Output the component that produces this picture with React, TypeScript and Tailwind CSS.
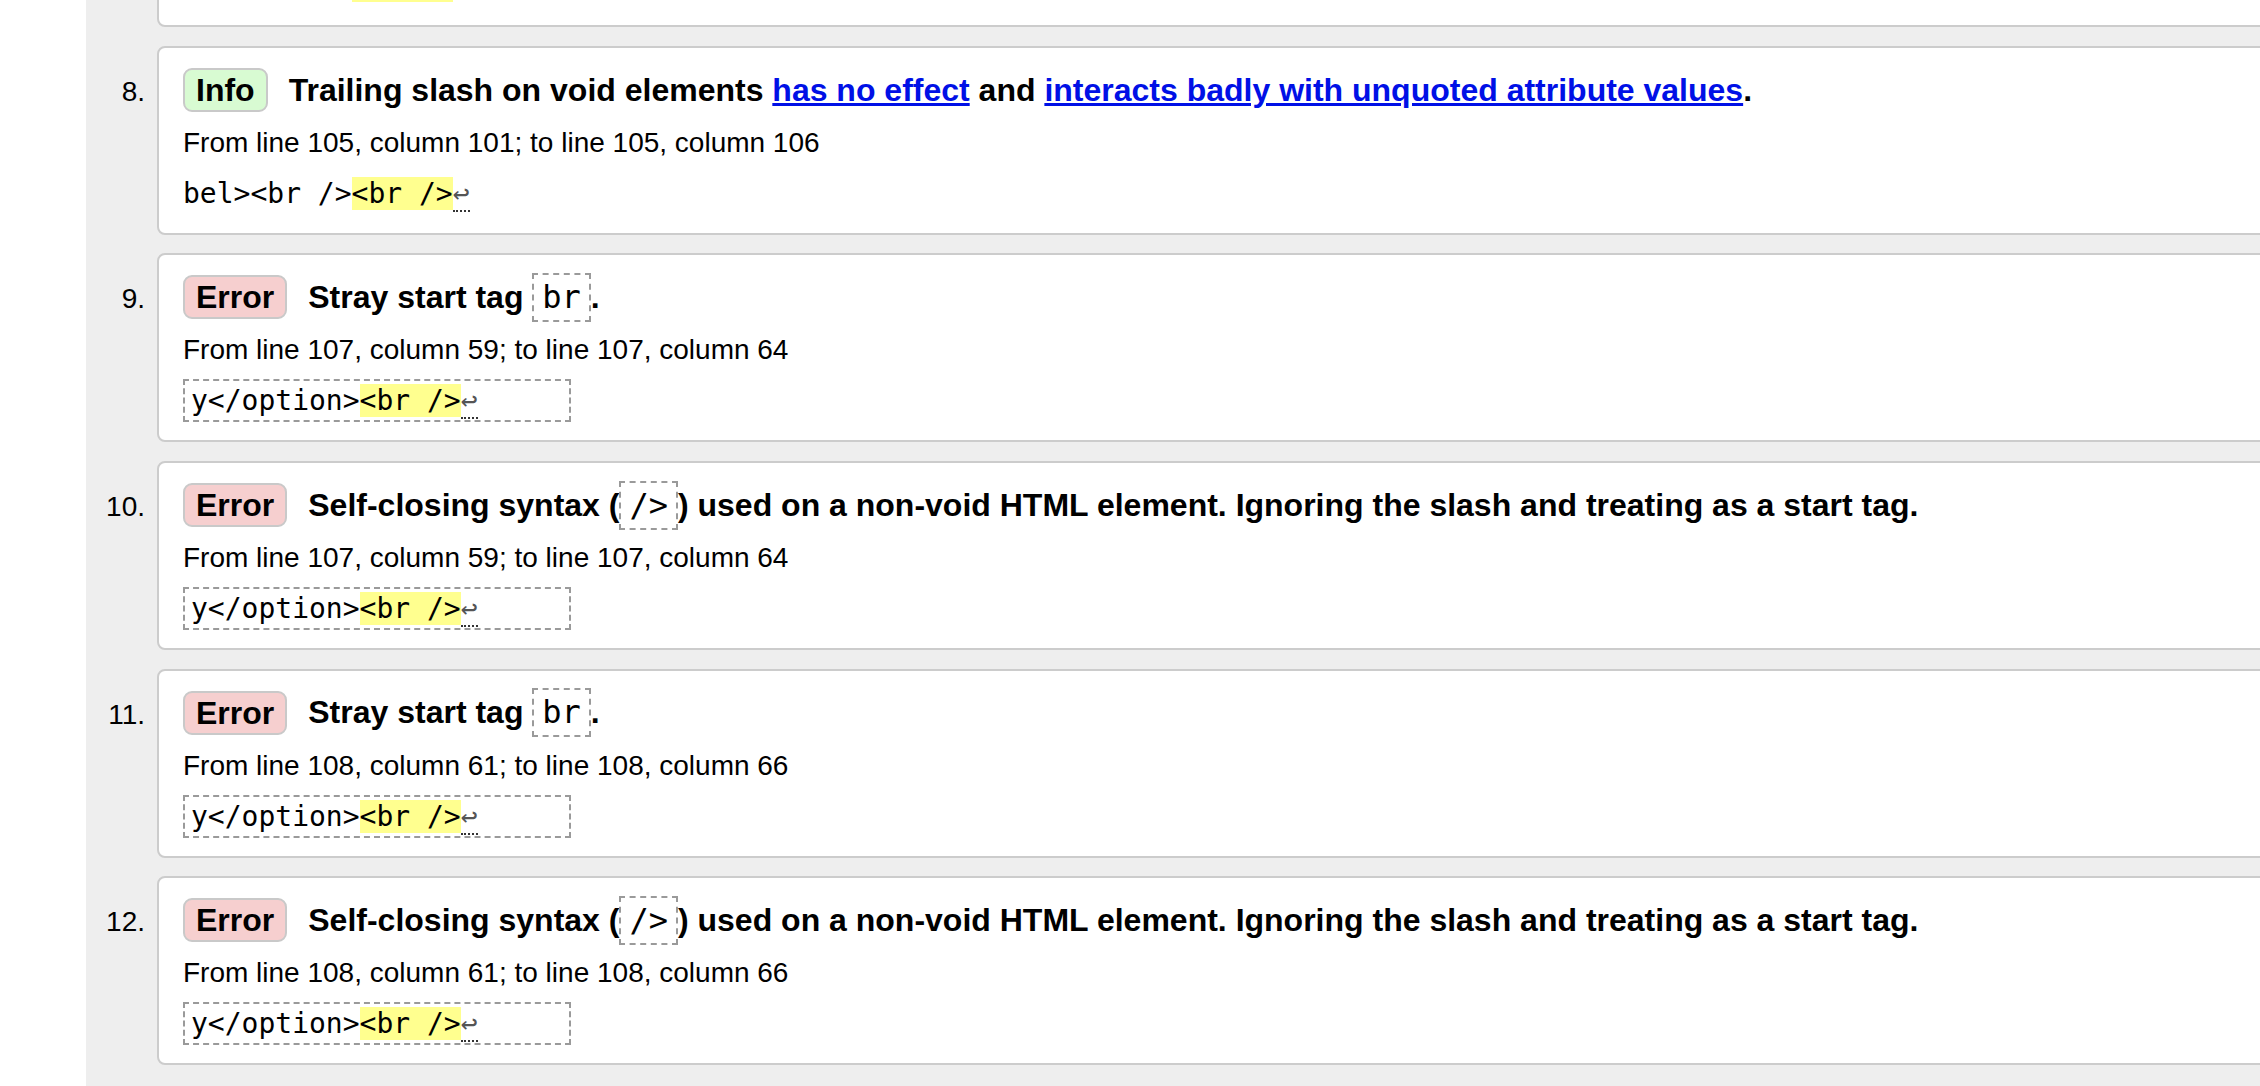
import React from 'react'

type Part = string | { code: string } | { link: string }

type Issue = {
  n: number
  kind: 'info' | 'error'
  title: Part[]
  from: string
  pre: string
  mark: string
  lf: boolean
  boxed: boolean
}

const trailingSlash: Part[] = [
  'Trailing slash on void elements ',
  { link: 'has no effect' },
  ' and ',
  { link: 'interacts badly with unquoted attribute values' },
  '.',
]

const strayBr: Part[] = ['Stray start tag ', { code: 'br' }, '.']

const selfClosing: Part[] = [
  'Self-closing syntax (',
  { code: '/>' },
  ') used on a non-void HTML element. Ignoring the slash and treating as a start tag.',
]

const issues: Issue[] = [
  { n: 7, kind: 'info', title: trailingSlash, from: 'From line 105, column 95; to line 105, column 100', pre: 'on</label>', mark: '<br />', lf: false, boxed: false },
  { n: 8, kind: 'info', title: trailingSlash, from: 'From line 105, column 101; to line 105, column 106', pre: 'bel><br />', mark: '<br />', lf: true, boxed: false },
  { n: 9, kind: 'error', title: strayBr, from: 'From line 107, column 59; to line 107, column 64', pre: 'y</option>', mark: '<br />', lf: true, boxed: true },
  { n: 10, kind: 'error', title: selfClosing, from: 'From line 107, column 59; to line 107, column 64', pre: 'y</option>', mark: '<br />', lf: true, boxed: true },
  { n: 11, kind: 'error', title: strayBr, from: 'From line 108, column 61; to line 108, column 66', pre: 'y</option>', mark: '<br />', lf: true, boxed: true },
  { n: 12, kind: 'error', title: selfClosing, from: 'From line 108, column 61; to line 108, column 66', pre: 'y</option>', mark: '<br />', lf: true, boxed: true },
]

const mono = "font-['DejaVu_Sans_Mono',Menlo,monospace]"

function Title({ parts }: { parts: Part[] }) {
  return (
    <span className="ml-[21px] whitespace-nowrap text-[32px] font-bold leading-[44px]">
      {parts.map((p, i) => {
        if (typeof p === 'string') return <React.Fragment key={i}>{p}</React.Fragment>
        if ('code' in p)
          return (
            <code key={i} className={`${mono} inline-block border-2 border-dashed border-[#9a9a9a] px-[8px] py-[4px] font-normal leading-[37px]`}>
              {p.code}
            </code>
          )
        return (
          <a key={i} href="#" className="text-[#0010e6] underline">
            {p.link}
          </a>
        )
      })}
    </span>
  )
}

function IssueCard({ issue }: { issue: Issue }) {
  const hasCode = issue.title.some((p) => typeof p !== 'string' && 'code' in p)
  return (
    <li className="flex">
      <div className="w-[59px] shrink-0 pt-[24px] text-right text-[28px] leading-[44px]">{issue.n}.</div>
      <div className="-mr-[20px] ml-[12px] flex-1 rounded-[8px] border-2 border-[#cccccc] bg-white pb-[18px] pl-[24px] pt-[20px]">
        <div className={`flex h-[44px] items-center ${hasCode ? 'mb-[2px]' : ''}`}>
          <span
            className={`flex h-[44px] items-center rounded-[9px] border-2 border-[#c9c9c9] px-[11px] text-[32px] font-bold ${
              issue.kind === 'info' ? 'bg-[#d8fbd2]' : 'bg-[#f6cfcf]'
            }`}
          >
            {issue.kind === 'info' ? 'Info' : 'Error'}
          </span>
          <Title parts={issue.title} />
        </div>
        <p className="mt-[13px] text-[28px] leading-[36px]">{issue.from}</p>
        <div
          className={`${mono} mt-[11px] whitespace-pre text-[28px] leading-[33px] ${
            issue.boxed ? 'w-[388px] border-2 border-dashed border-[#9a9a9a] py-[3px] pl-[6px]' : 'border-y-2 border-transparent py-[3px]'
          }`}
        >
          {issue.pre}
          <span className="bg-[#ffff8f]">{issue.mark}</span>
          {issue.lf ? <span className="border-b-2 border-dotted border-[#333] text-[#555]">↩</span> : null}
        </div>
      </div>
    </li>
  )
}

export default function App() {
  return (
    <div className="flex h-[1086px] overflow-hidden bg-white font-['Liberation_Sans',Arial,sans-serif] text-black">
      <div className="w-[86px] shrink-0 bg-white" />
      <div className="flex-1 overflow-hidden bg-[#eeeeee]">
        <ol className="-mt-[162px] flex flex-col gap-[18.7px]">
          {issues.map((it) => (
            <IssueCard key={it.n} issue={it} />
          ))}
        </ol>
      </div>
    </div>
  )
}
